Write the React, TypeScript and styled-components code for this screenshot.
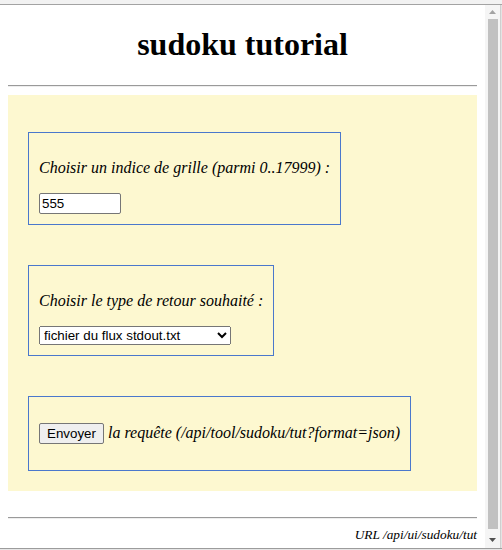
import React from "react";
import styled, { createGlobalStyle } from "styled-components";

const Global = createGlobalStyle`
  html, body { margin: 0; padding: 0; background: #ffffff; overflow: hidden; }
  #root { width: 502px; height: 550px; }
`;

const Window = styled.div`
  width: 502px;
  height: 550px;
  display: flex;
  flex-direction: column;
  background: #ffffff;
  box-sizing: border-box;
`;

const TopStrip = styled.div`
  height: 4px;
  background: #f2f2f2;
  border-bottom: 1px solid #a3a3a3;
  flex: none;
`;

const BottomStrip = styled.div`
  height: 1px;
  background: #e6e6e6;
  border-top: 1px solid #9c9c9c;
  flex: none;
`;

const Middle = styled.div`
  flex: 1;
  display: flex;
  min-height: 0;
`;

const Viewport = styled.div`
  width: 485px;
  flex: none;
  overflow: hidden;
  background: #ffffff;
  font-family: "Liberation Serif", "Times New Roman", serif;
  font-size: 16px;
  color: #000;
`;

const Page = styled.div`
  padding: 0 8px;
  display: flow-root;
`;

const Title = styled.h1`
  font-size: 32px;
  font-weight: bold;
  text-align: center;
  margin: 21.44px 0;
  line-height: normal;
`;

const Rule = styled.hr`
  margin: 8px 0;
  border: none;
  border-top: 1px solid #9a9a9a;
  border-bottom: 1px solid #eeeeee;
  height: 0;
`;

const Panel = styled.div`
  background: #fdf8d0;
  padding: 37px 20px 20px;
  margin-bottom: 26px;
  display: flex;
  flex-direction: column;
  align-items: flex-start;
  gap: 40px;
`;

const Box = styled.div`
  border: 1px solid #4a78cc;
  padding: 10px;
  display: flex;
  flex-direction: column;
  align-items: flex-start;
`;

const Label = styled.p`
  margin: 16px 0;
  font-style: italic;
  line-height: normal;
  white-space: nowrap;
`;

const SendLine = styled.p`
  margin: 16px 0;
  font-style: italic;
  display: flex;
  align-items: center;
  gap: 4px;
  white-space: nowrap;
`;

const TextInput = styled.input`
  width: 82px;
  height: 21px;
  box-sizing: border-box;
  font-family: "Liberation Sans", Arial, sans-serif;
  font-size: 13.333px;
  padding: 1px 2px;
  border: 1px solid #767676;
  border-radius: 2px;
  background: #fff;
  color: #000;
  display: block;
  margin: 0;
`;

const Select = styled.select`
  width: 192px;
  height: 19px;
  box-sizing: border-box;
  font-family: "Liberation Sans", Arial, sans-serif;
  font-size: 13.333px;
  color: #000;
  display: block;
  margin: 0;
`;

const Button = styled.button`
  font-family: "Liberation Sans", Arial, sans-serif;
  font-size: 13.333px;
  font-style: normal;
  height: 21px;
  width: 65px;
  padding: 1px 6px;
  margin: 0;
  color: #000;
  background: #efefef;
  border: 1px solid #767676;
  border-radius: 2px;
`;

const Footer = styled.div`
  text-align: right;
  font-style: italic;
  font-size: 13.333px;
  line-height: normal;
`;

const Scrollbar = styled.div`
  width: 15px;
  flex: none;
  background: #f5f5f5;
  display: flex;
  flex-direction: column;
  align-items: center;
`;

const ArrowButton = styled.div<{ $h: number }>`
  height: ${(p) => p.$h}px;
  width: 100%;
  display: flex;
  align-items: center;
  justify-content: center;
  flex: none;
`;

const Thumb = styled.div`
  flex: 1;
  width: 10px;
  margin-bottom: 2px;
  background: #c1c1c1;
`;

const Edge = styled.div`
  width: 2px;
  flex: none;
  background: #e4e4e4;
  border-left: 1px solid #cfcfcf;
  box-sizing: border-box;
`;

const Arrow = ({ up, color }: { up?: boolean; color: string }) => (
  <svg width="7" height="4" viewBox="0 0 7 4">
    {up ? (
      <polygon points="0,4 7,4 3.5,0" fill={color} />
    ) : (
      <polygon points="0,0 7,0 3.5,4" fill={color} />
    )}
  </svg>
);

export default function App() {
  return (
    <>
      <Global />
      <Window>
        <TopStrip />
        <Middle>
          <Viewport>
            <Page>
              <Title>sudoku tutorial</Title>
              <Rule />
              <Panel>
                <Box>
                  <Label>Choisir un indice de grille (parmi 0..17999) :</Label>
                  <TextInput type="text" defaultValue="555" />
                </Box>
                <Box>
                  <Label>Choisir le type de retour souhaité :</Label>
                  <Select defaultValue="txt">
                    <option value="txt">fichier du flux stdout.txt</option>
                    <option value="json">réponse json</option>
                    <option value="html">page html</option>
                  </Select>
                </Box>
                <Box>
                  <SendLine>
                    <Button type="button">Envoyer</Button>
                    <span>la requête (/api/tool/sudoku/tut?format=json)</span>
                  </SendLine>
                </Box>
              </Panel>
              <Rule />
              <Footer>URL /api/ui/sudoku/tut</Footer>
            </Page>
          </Viewport>
          <Scrollbar>
            <ArrowButton $h={14}>
              <Arrow up color="#a3a3a3" />
            </ArrowButton>
            <Thumb />
            <ArrowButton $h={17}>
              <Arrow color="#505050" />
            </ArrowButton>
          </Scrollbar>
          <Edge />
        </Middle>
        <BottomStrip />
      </Window>
    </>
  );
}
